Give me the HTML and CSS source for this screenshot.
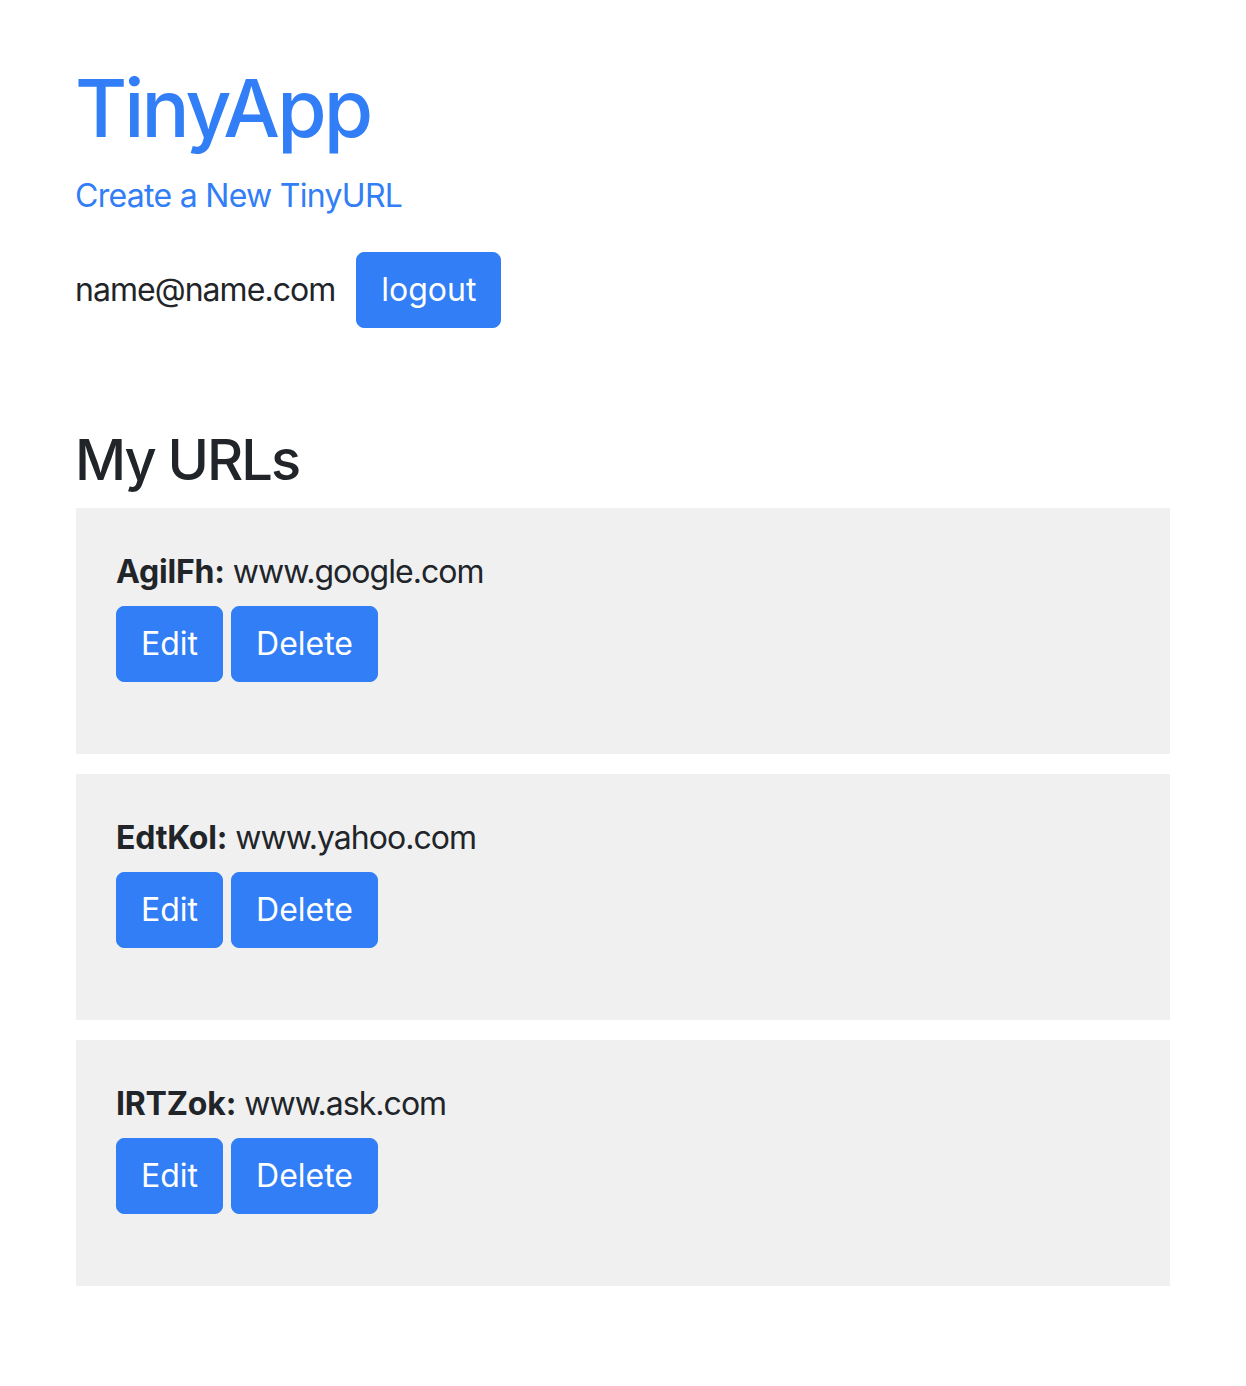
FILE: index.html
```html
<!DOCTYPE html>
<html lang="en">
<head>
<meta charset="utf-8">
<title>TinyApp</title>
<link rel="stylesheet" href="styles.css">
</head>
<body>
<div class="page">
  <header class="site-header">
    <h1 class="brand">TinyApp</h1>
    <a class="new-link" href="#">Create a New TinyURL</a>
    <div class="user-row">
      <span class="user-email">name@name.com</span>
      <button class="btn" type="button">logout</button>
    </div>
  </header>
  <main>
    <h3 class="section-title">My URLs</h3>
    <div class="url-card">
      <div class="url-line"><strong>AgilFh:</strong> www.google.com</div>
      <div class="url-actions">
        <button class="btn" type="button">Edit</button>
        <button class="btn" type="button">Delete</button>
      </div>
    </div>
    <div class="url-card">
      <div class="url-line"><strong>EdtKol:</strong> www.yahoo.com</div>
      <div class="url-actions">
        <button class="btn" type="button">Edit</button>
        <button class="btn" type="button">Delete</button>
      </div>
    </div>
    <div class="url-card">
      <div class="url-line"><strong>IRTZok:</strong> www.ask.com</div>
      <div class="url-actions">
        <button class="btn" type="button">Edit</button>
        <button class="btn" type="button">Delete</button>
      </div>
    </div>
  </main>
</div>
</body>
</html>
```
FILE: styles.css
```css
* { box-sizing: border-box; }
html, body { margin: 0; padding: 0; background: #ffffff; }
body {
  font-family: Inter, "Liberation Sans", sans-serif;
  font-size: 32px;
  line-height: 48px;
  letter-spacing: -0.03em;
  color: #212529;
}
.page { padding: 60px 76px 40px 75px; }
.site-header { display: flex; flex-direction: column; align-items: flex-start; }
.brand {
  margin: 0 0 16px;
  font-size: 80px;
  line-height: 96px;
  font-weight: 500;
  letter-spacing: -0.036em;
  color: #317ef6;
}
.new-link { color: #317ef6; text-decoration: none; letter-spacing: -0.022em; }
.user-row { display: flex; align-items: center; gap: 21px; margin-top: 32px; }
.btn {
  font-family: inherit;
  font-size: 32px;
  line-height: 48px;
  letter-spacing: 0;
  padding: 13px 24px;
  border: 1px solid #317ef6;
  background: #317ef6;
  color: #ffffff;
  border-radius: 8px;
  cursor: pointer;
}
.section-title {
  margin: 99px 0 14px;
  font-size: 56px;
  line-height: 67px;
  font-weight: 500;
  letter-spacing: -0.036em;
}
.url-card {
  background: #f0f0f0;
  padding: 40px 40px 72px 40px;
  margin: 0 0 20px 1px;
}
.url-line strong { font-weight: 700; letter-spacing: -0.006em; }
.url-actions { display: flex; gap: 8px; margin-top: 10px; }
```
